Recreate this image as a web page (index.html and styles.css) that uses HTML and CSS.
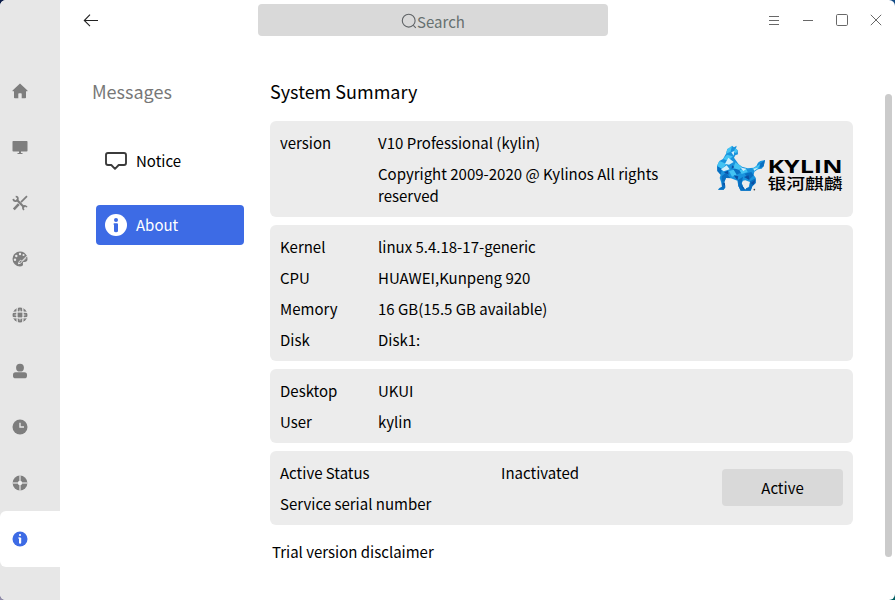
FILE: index.html
```html
<!DOCTYPE html>
<html lang="en">
<head>
<meta charset="utf-8">
<title>System Summary</title>
<link rel="stylesheet" href="styles.css">
</head>
<body>
<div class="window">
  <nav class="rail">
    <a class="rail-item"><svg class="icon" viewBox="0 0 16 16"><path d="M8 .5 15.500 7.400V8.300H14V14.500Q14 15.300 13.200 15.300H9.700V11Q9.700 10.300 9 10.300H7Q6.300 10.300 6.300 11V15.300H2.800Q2 15.300 2 14.500V8.300H.5V7.400Z"/></svg></a>
    <a class="rail-item"><svg class="icon" viewBox="0 0 16 16"><rect x=".5" y="2" width="15" height="10.500" rx=".8"/><path d="M7 12h2v2h1.500v.9h-5V14H7z"/></svg></a>
    <a class="rail-item"><svg class="icon" viewBox="0 0 16 16"><g fill="none" stroke="#7e7e7e"><path d="M4.500 4.500 12.300 12.500" stroke-width="2.200"/><path d="M3.700 1.500A2.300 2.300 0 1 1 1.300 3.900M12.200 14.800A2 2 0 1 1 14.800 12.300" stroke-width="1.700"/><path d="M15 1.200 9 7.200" stroke-width="1.700"/><path d="M6.800 9.200 1.800 14.300" stroke-width="2.600"/></g></svg></a>
    <a class="rail-item"><svg class="icon" viewBox="0 0 16 16"><path d="M8 .5C12.500.5 15.500 4 15.500 8c0 2.500-1.500 3.200-3.500 3-1.500 0-1.200 1.200-1 2.200.3 1.500-1 2.300-3 2.300A7.500 7.500 0 0 1 8 .5Z"/><g fill="#e7e7e7"><circle cx="4.300" cy="5" r="1.200"/><circle cx="8" cy="3" r="1.200"/><circle cx="3" cy="8.700" r="1.200"/><circle cx="11.500" cy="4" r="1.100"/></g><path d="M14.800 5 9.500 10.300M6 12.800Q9 13 10 10.500L8.700 9.200Q7 9.800 6.500 12.500Z" fill="none" stroke="#e7e7e7" stroke-width="1"/><path d="M14.500 6.700 11 10.200" stroke="#e7e7e7" stroke-width=".8"/></svg></a>
    <a class="rail-item"><svg class="icon" viewBox="0 0 16 16"><circle cx="8" cy="8" r="7.500"/><g fill="none" stroke="#e7e7e7" stroke-width="1.300"><path d="M5.300.5Q4.400 8 5.300 15.500M10.700.5Q11.600 8 10.700 15.500M.5 5.300Q8 4.400 15.500 5.300M.5 10.700Q8 11.600 15.500 10.700"/><path d="M8 2.500V5.500M8 10.500V13.500M2.500 8H5.500M10.500 8H13.500" stroke-width=".8"/></g></svg></a>
    <a class="rail-item"><svg class="icon" viewBox="0 0 16 16"><circle cx="8" cy="4.700" r="3.900"/><rect x="1" y="9.300" width="14" height="6" rx="2.600"/></svg></a>
    <a class="rail-item"><svg class="icon" viewBox="0 0 16 16"><circle cx="8" cy="8" r="7.500"/><path d="M8 3.700V8h4" fill="none" stroke="#e7e7e7" stroke-width="1.400"/></svg></a>
    <a class="rail-item"><svg class="icon" viewBox="0 0 16 16"><circle cx="8" cy="8" r="7.400"/><path d="M8 0V16M0 8H16" stroke="#d3d3d3" stroke-width="1.500"/><circle cx="8" cy="8" r="2.200" fill="#eee"/></svg></a>
    <a class="rail-item rail-item-active"><svg class="icon icon-info" viewBox="0 0 16 16"><circle cx="8" cy="8" r="7.500"/><g fill="#fff"><circle cx="8" cy="4" r="1.100"/><rect x="7" y="6.400" width="2.200" height="6.400" rx="1"/><path d="M6.200 6.400H8v1H6.200z"/></g></svg></a>
  </nav>

  <div class="body">
    <header class="titlebar">
      <svg class="back" viewBox="0 0 16 14"><path d="M15 7.500H1.500M7 1.700 1.300 7.500 7 13.200" fill="none" stroke="#222" stroke-width="1.100"/></svg>
      <div class="search">
        <svg class="search-icon" viewBox="0 0 16 16"><g fill="none" stroke="#5f6366" stroke-width="1.100"><circle cx="7.700" cy="7.700" r="6.400"/><path d="m12.300 12.300 2.500 2.500"/></g></svg>
        <span>Search</span>
      </div>
      <div class="controls">
        <svg class="control" viewBox="0 0 16 16"><path d="M3 4.500H13M3 8.500H13M3 12.500H13"/></svg>
        <svg class="control" viewBox="0 0 16 16"><path d="M3 8.500H13"/></svg>
        <svg class="control" viewBox="0 0 16 16"><rect x="2.500" y="2.500" width="11" height="11" rx="1.200"/></svg>
        <svg class="control" viewBox="0 0 16 16"><path d="M2.800 2.800 13.200 13.200M13.200 2.800 2.800 13.200"/></svg>
      </div>
    </header>

    <div class="content">
      <aside class="menu">
        <h2 class="menu-title">Messages</h2>
        <a class="menu-item"><svg class="menu-icon" viewBox="0 0 24 24"><path d="M4 4H20Q22 4 22 6V14Q22 16 20 16H14.700L11 19.800 7.300 16H4Q2 16 2 14V6Q2 4 4 4Z" fill="none" stroke="#3b3b3b" stroke-width="1.900" stroke-linejoin="round"/></svg>Notice</a>
        <a class="menu-item menu-item-active"><svg class="menu-icon" viewBox="0 0 24 24"><circle cx="12" cy="12" r="11" fill="#fff"/><g fill="#3d6be5"><circle cx="12" cy="7" r="2"/><path d="M9.700 10.300H13Q14 10.300 14 11.300V18Q14 19.300 12 19.300T10 18V12H9.700Z"/></g></svg>About</a>
      </aside>

      <main class="main">
        <h1 class="title">System Summary</h1>
        <section class="card">
          <dl class="rows rows-version">
            <dt>version</dt><dd>V10 Professional (kylin)</dd>
            <dt></dt><dd>Copyright 2009-2020 @ Kylinos All rights reserved</dd>
          </dl>
          <svg class="logo" viewBox="0 0 130 52">
            <g transform="scale(.33333)">
              <path fill="#1993dd" d="M40 21 50 18 54 11 60 16 68 11 66 20 71 25 72 37 64 40 60 47 67 57 74 67 84 74 101 79 119 77 127 72 132 62 139 57 153 54 149 73 143 80 132 82 121 89 119 99 125 107 125 123 115 133 110 146H92L97 139 104 136 108 120 94 115 87 116 83 124 88 136 96 146H80L73 132 70 116 51 109 36 108 31 121 34 136 29 143H12L16 138 24 134 21 119 17 108 20 98 10 87 9 72 16 57 27 51 36 35Z"/>
              <path fill="#096fc1" d="M10 70 24 82 20 98 10 87ZM23 103 36 92 49 108 36 108 31 119 23 119ZM57 82 76 78 83 91 66 99ZM92 95 112 90 119 100 105 113ZM72 114 87 104 83 124 88 136 96 146H80L73 132ZM108 118 125 109 125 123 115 133 110 146H92L97 139 107 135ZM24 121 31 121 34 136 29 143H12L24 134ZM137 66 153 54 149 73 139 78Z"/>
              <path fill="#43c3f3" d="M40 21 54 11 50 29 36 35ZM27 51 39 38 57 43 42 56ZM9 72 16 57 38 66 24 80ZM64 61 84 74 76 84 58 78ZM76 84 96 79 101 90 83 96ZM115 80 139 66 132 80 121 86ZM45 87 59 83 68 98 54 104ZM64 19 71 25 66 34 59 29Z"/>
              <path fill="#d2effb" d="M43 47 59 60 45 68 33 65ZM21 82 38 70 47 82 29 88ZM79 76 97 81 88 87ZM52 31 61 27 59 41ZM119 80 132 77 121 86Z"/>
              <path fill="#0b4fa3" d="M30 91 42 86 44 98ZM59 100 73 103 70 115ZM90 105 104 100 106 114ZM80 131 88 136 91 143ZM26 125 32 122 34 132ZM110 123 124 114 118 129ZM54 70 61 75 53 81Z"/>
              <circle cx="121" cy="143" r="2.500" fill="#444"/>
            </g>
            <text class="logo-latin" x="53.500" y="31" textLength="75" lengthAdjust="spacingAndGlyphs">KYLIN</text>
            <text class="logo-cjk" x="53.500" y="47" textLength="75" lengthAdjust="spacingAndGlyphs">银河麒麟</text>
          </svg>
        </section>
        <section class="card">
          <dl class="rows">
            <dt>Kernel</dt><dd>linux 5.4.18-17-generic</dd>
            <dt>CPU</dt><dd>HUAWEI,Kunpeng 920</dd>
            <dt>Memory</dt><dd>16 GB(15.5 GB available)</dd>
            <dt>Disk</dt><dd>Disk1:</dd>
          </dl>
        </section>
        <section class="card">
          <dl class="rows">
            <dt>Desktop</dt><dd>UKUI</dd>
            <dt>User</dt><dd>kylin</dd>
          </dl>
        </section>
        <section class="card">
          <dl class="rows rows-status">
            <dt>Active Status</dt><dd>Inactivated</dd>
            <dt>Service serial number</dt><dd></dd>
          </dl>
          <button class="button">Active</button>
        </section>
        <a class="disclaimer">Trial version disclaimer</a>
      </main>
      <div class="scrollbar"></div>
    </div>
  </div>
</div>
</body>
</html>
```
FILE: styles.css
```css
* { box-sizing: border-box; margin: 0; padding: 0; }
body {
  width: 895px;
  height: 600px;
  overflow: hidden;
  background: conic-gradient(#124b86 0 25%, #005f62 0 50%, #8f8ba8 0 75%, #0b1c48 0);
  font: 15px/22px "Noto Sans CJK SC", "Noto Sans", sans-serif;
  color: #000;
}
svg { display: block; flex: none; }
.window { display: flex; height: 600px; background: #fff; border-radius: 6px; overflow: hidden; }

.rail { width: 60px; flex: none; padding-top: 63px; background: #e7e7e7; }
.rail-item { display: flex; align-items: center; height: 56px; padding-left: 12px; }
.rail-item-active { background: #fff; border-radius: 6px 0 0 6px; }
.icon { width: 16px; height: 16px; fill: #7e7e7e; }
.icon-info { fill: #3d6be5; }

.body { flex: 1; display: flex; flex-direction: column; min-width: 0; }
.titlebar { display: flex; align-items: flex-start; height: 77px; padding: 4px 11px 0 23px; }
.back { width: 16px; height: 14px; margin-top: 9px; }
.search {
  display: flex; align-items: center; justify-content: center;
  width: 350px; height: 32px; margin-left: 159px;
  background: #d9d9d9; border-radius: 4px; color: #66706f;
}
.search span { padding-top: 4px; }
.search-icon { width: 16px; height: 16px; margin-top: 2px; }
.controls { display: flex; gap: 18px; margin: 8px 0 0 auto; }
.control { width: 16px; height: 16px; fill: none; stroke: #686868; stroke-width: 1; }

.content { flex: 1; display: flex; min-height: 0; }
.menu { width: 210px; padding-left: 32px; flex: none; }
.menu-title { font-size: 18px; font-weight: 400; line-height: 28px; color: #777; margin-bottom: 36px; }
.menu-item { display: flex; align-items: center; gap: 8px; width: 148px; height: 40px; margin: 0 0 24px 4px; padding-left: 8px; border-radius: 4px; }
.menu-item-active { background: #3d6be5; color: #fff; }
.menu-icon { width: 24px; height: 24px; }

.main { width: 583px; flex: none; }
.title { font-size: 18px; font-weight: 400; line-height: 28px; margin-bottom: 16px; }
.card { display: flex; justify-content: space-between; margin-bottom: 8px; padding: 11px 10px 10px; background: #ececec; border-radius: 6px; }
.rows { display: grid; grid-template-columns: 98px 1fr; grid-auto-rows: minmax(22px, auto); row-gap: 9px; }
.rows-version { width: 400px; }
.rows-status { grid-template-columns: 221px 1fr; }
.logo { width: 130px; height: 52px; margin: 10px -1px 0 0; overflow: visible; }
.logo-latin { font: 700 18px "Open Sans", sans-serif; }
.logo-cjk { font: 500 15px "Noto Sans CJK SC", sans-serif; }
.button { width: 121px; height: 37px; margin-top: 7px; border: 0; border-radius: 4px; background: #d9d9d9; font: inherit; color: #000; }
.disclaimer { display: block; padding: 8px 0 0 2px; }
.scrollbar { width: 7px; height: 463px; margin: 17px 0 0 32px; border-radius: 4px; background: #cbcbcb; }
```
